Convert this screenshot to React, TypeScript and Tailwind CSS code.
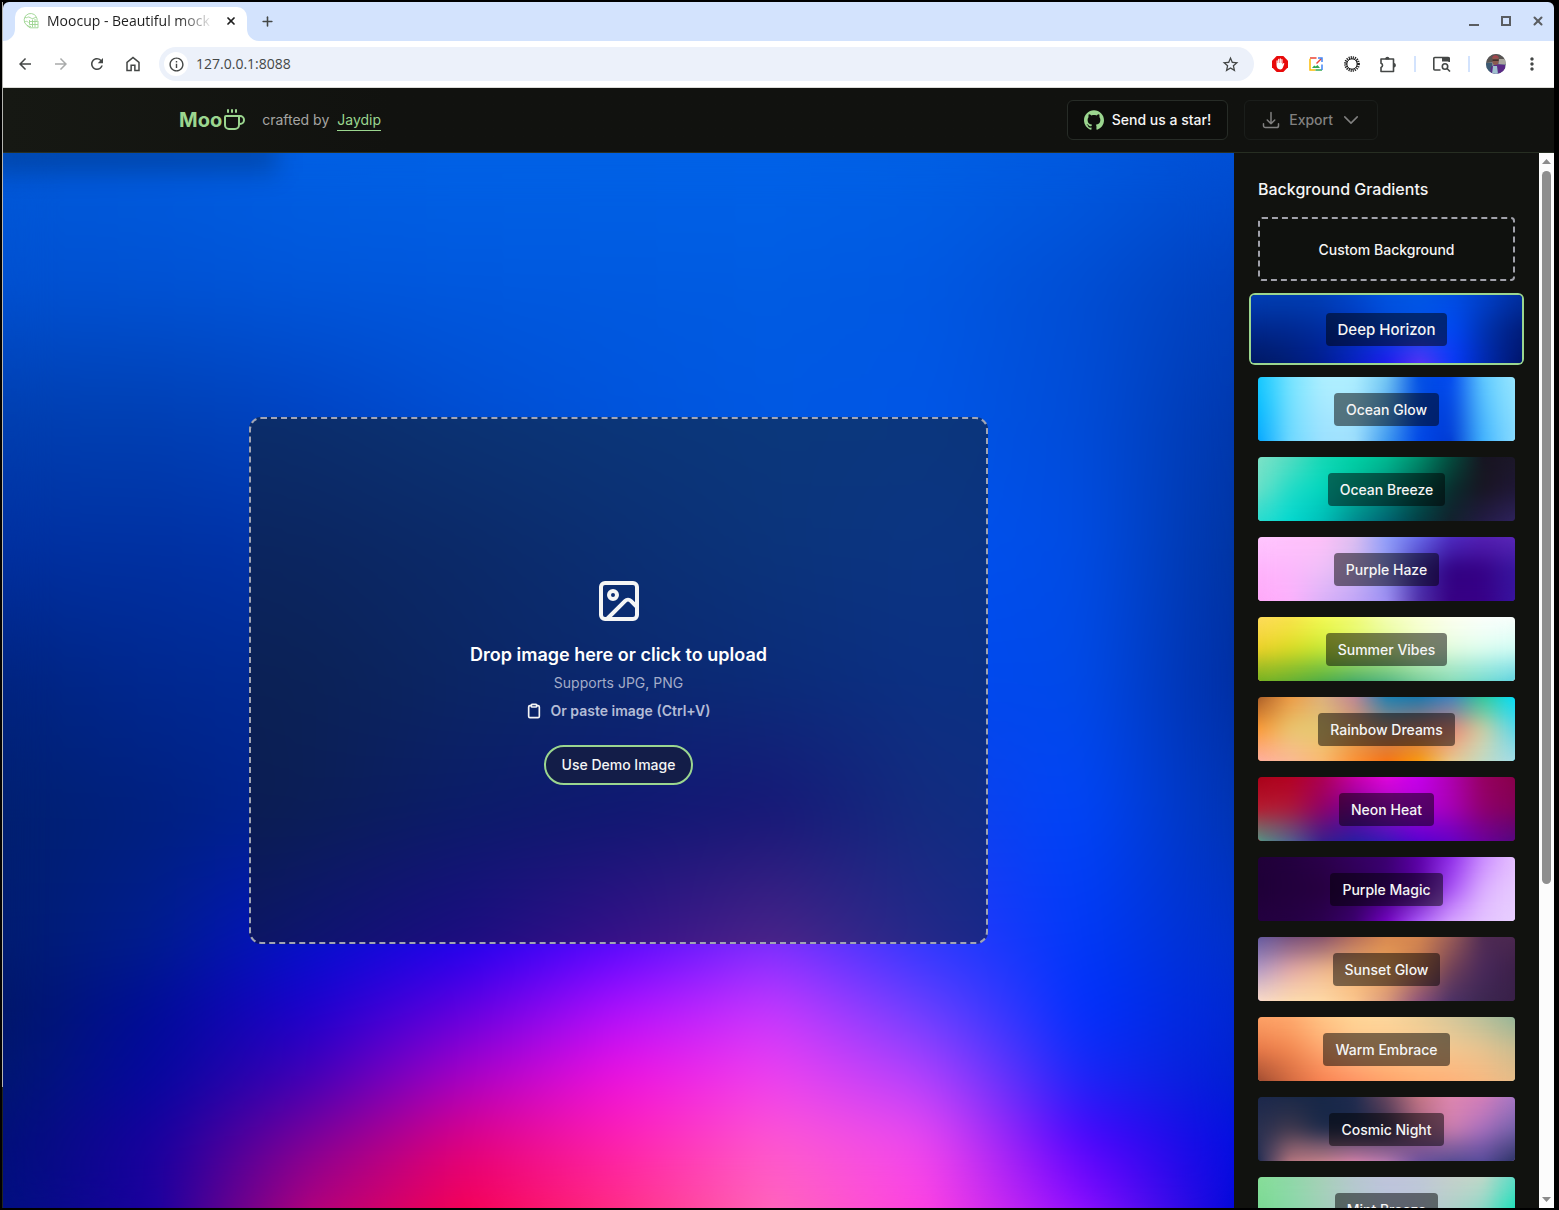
import React from "react";
import { Clipboard, Coffee, Image as ImageIcon, Plus, X } from "lucide-react";
import { MdArrowBack, MdArrowForward, MdInfoOutline, MdMoreVert, MdRefresh, MdStarOutline } from "react-icons/md";
import { SiGithub } from "react-icons/si";

type Mesh = string[];

/* Rows of evenly spaced colour stops, blended into each other from top to bottom. */
function MeshRows({ rows, positions }: { rows: Mesh; positions?: number[] }) {
  const at = (i: number) => (positions ? positions[i] : (i * 100) / (rows.length - 1));
  return (
    <>
      {rows.map((row, i) => {
        const stops = row.split(" ").map((c) => `#${c}`).join(", ");
        const mask = i === 0 ? undefined : `linear-gradient(to bottom, transparent ${at(i - 1)}%, black ${at(i)}%)`;
        return (
          <span
            key={i}
            className="absolute inset-0"
            style={{ backgroundImage: `linear-gradient(to right, ${stops})`, maskImage: mask }}
          />
        );
      })}
    </>
  );
}

/* A sharp copy keeps the edges opaque; the blurred copy above it softens the colour joins. */
function MeshGradient({ rows, positions, blur }: { rows: Mesh; positions?: number[]; blur: string }) {
  return (
    <>
      <MeshRows rows={rows} positions={positions} />
      <span className={`absolute inset-0 ${blur}`}>
        <MeshRows rows={rows} positions={positions} />
      </span>
    </>
  );
}

const canvasPositions = [0, 12.5, 25, 37.5, 50, 62.5, 75, 81.25, 87.5, 93.75, 100];

const canvasMesh: Mesh = [
  "005ada 005cde 0060e4 0062e6 0062e6 0062e8 0060e4 005ae0 0050d6",
  "0050d0 0052d4 0056da 0058de 005ae0 005ce2 0058e2 004ed4 0040bc",
  "003fb0 0040b4 0044c4 004ed2 0054dc 0058e2 0056e6 004cd8 0038ac",
  "0030a0 0031a2 0034ac 003cbc 0046d0 0050e0 0052f0 004ce4 0034a0",
  "002480 002890 002c98 0034b4 003ac8 0040dc 0048f0 004ae8 002ea0",
  "002070 002080 002498 0020bc 0818cc 1818d8 1040e8 0044f8 0034b0",
  "001c70 001c90 0410cc 2000f0 5808ff 8030ff 3038ff 0038f8 0030c8",
  "001868 000c98 1c00d0 6000e0 b010ff c838ff 6840ff 0030ff 0028d0",
  "001870 0408a0 4000b8 a800c8 f010e0 f040f0 b040ff 1828f8 0020d0",
  "001078 1800a0 800098 e00080 ff20b0 ff58d0 f048f0 5000ff 0010e0",
  "001080 1c00a0 b80078 f80050 ff3080 ff68b8 ff40e0 9810ff 0008d8",
];

const gradients: { name: string; selected?: boolean; mesh: Mesh }[] = [
  {
    name: "Deep Horizon",
    selected: true,
    mesh: [
      "0040b8 0040b4 0040b8 0048cc 0054e0 0058e4 004ee0 0040c8 0030a0",
      "00288c 002890 002c9c 0034b8 0048d8 0050e8 0048f4 0030a8 001c78",
      "001860 001c70 001c8c 0820c0 2018f0 6030f8 0838f8 0028a8 001468",
    ],
  },
  {
    name: "Ocean Glow",
    mesh: [
      "10c8ff 78e4ff b0f0ff b0f0ff 78ccf4 0050e4 0048f0 60ccff 9ce8ff",
      "00b8ff 74e0ff a8e8ff a8e8ff 60b4f0 0048e0 0040e0 50c0ff 94e4ff",
      "00a4ff 70d8ff 9ce0ff a0e0fc 3c98f0 0048e8 0038d0 40b4ff 8cdcff",
    ],
  },
  {
    name: "Ocean Breeze",
    mesh: [
      "80e4c8 58dcc0 18d8b4 00d4a8 00c094 009470 045040 181420 1c1828",
      "70e0c8 20dcc8 00d8c0 00b898 009080 005c50 082c2c 181420 201838",
      "28dcd0 00d8d0 00bcb8 008890 006070 043c44 14202c 241c48 302460",
    ],
  },
  {
    name: "Purple Haze",
    mesh: [
      "ffc8ff ffc4fc ffc0f8 e0c0f0 90a0fc 6c70f0 5030c8 5824b8 5c28b8",
      "ffb4fc fcb8fc f0c0f8 d0b8f0 9098f0 4030b0 300080 340084 3818a0",
      "ffa8f8 fcb0fc d8b0f8 c0a4f8 a090f4 5030a8 380084 380088 3814a0",
    ],
  },
  {
    name: "Summer Vibes",
    mesh: [
      "ffdc60 fce450 f8fc58 f4fc78 f8ffb8 fcffd8 fffff0 fefefc fcfefc",
      "f0d028 dcdc20 c8e830 d8f460 d8f888 e8ffc0 e4fce0 e0fff0 d0fcf4",
      "70b020 5cac34 44a848 38a468 48b080 6cc898 80d8b4 6cd8cc 58d0e0",
    ],
  },
  {
    name: "Rainbow Dreams",
    mesh: [
      "a05828 f09840 dcb080 c0849c 0c80b8 0878b4 3080c8 20c898 00e0ff",
      "ff9830 e8c870 e4cc70 d8a060 b08878 c87868 f08070 d8d0a0 50d8f0",
      "ffb0a8 fcb898 fcb870 ff9030 ff7008 ff9c00 e8d090 c0dcc8 a8dce8",
    ],
  },
  {
    name: "Neon Heat",
    mesh: [
      "a80018 b40020 b00050 d000a8 e808e0 c800f0 b000b0 980060 880048",
      "b81c30 b01838 900068 7800a0 a008c0 b000d8 a800b8 90006c 800058",
      "50a088 486898 302090 2020a0 3018b8 5000d0 6000c8 6800a0 500880",
    ],
  },
  {
    name: "Purple Magic",
    mesh: [
      "200038 240040 2c004c 340060 3c0070 5c00a8 8c28e8 c888ff e8c4ff",
      "200038 22003c 26003e 2c0050 380070 5800a0 a850f8 dcb0ff e8ccff",
      "240040 260044 2c0050 3c0070 7800c8 b060ff d8a8ff e4c4ff e8d0ff",
    ],
  },
  {
    name: "Sunset Glow",
    mesh: [
      "6058a0 6c4878 7c4868 b06858 d88850 d88850 a06058 502c54 4c2850",
      "b098c8 e4a8a8 f0b890 f4b470 f0a858 c07850 704058 48285c 3c2048",
      "ffe0cc ffe0b0 ffdca8 fcc890 d89880 885080 483068 3c2850 382048",
    ],
  },
  {
    name: "Warm Embrace",
    mesh: [
      "ffa468 ffac70 ffc888 ffd898 fcd8a0 ecd098 d4c89c b4c09c 90b498",
      "e87848 f48850 ffa870 ffc088 ffc888 fcc890 f4c890 e8c490 c8bc90",
      "984830 d06840 f88050 ff9060 ffa068 ffac70 ffb078 f8b880 e8bc88",
    ],
  },
  {
    name: "Cosmic Night",
    mesh: [
      "1c284c 182848 182848 202c50 6c4860 c87884 e088b0 d880b8 a878c8",
      "283050 40384c 182848 182848 302c4c a06080 d080b0 a870c0 7060a8",
      "182850 c07c84 d08890 e088b0 c080b8 6850a0 4c4890 504898 283060",
    ],
  },
  {
    name: "Mint Breeze",
    mesh: [
      "88e098 90d8a8 a8d0b8 b8c8d0 c0c4dc c0c8d8 c8d0cc c8d8c8 60dcc8",
      "78d890 88d8a8 a0d0b8 b0c8cc b8c4dc b8c4d8 b0d0c8 90d8c8 10e0b8",
      "60d080 80d0a0 98c8b0 a8c0c8 b0c0d8 b0c4d8 a0d0c8 60d8c0 00e0b0",
    ],
  },
];

function Favicon() {
  return (
    <svg viewBox="0 0 16 16" className="size-4 shrink-0" fill="none" stroke="#9bd48f" strokeWidth="0.9">
      <path d="M14 8.500A6.500 6.500 0 1 0 8 13.500" />
      <path d="M2 4.500c2 1 3-1.500 5 0s3 1.500 6-.5M1.500 9.500c1.500-2 3-1 4 0M6.500 7v4.500M9.500 6.500V14M12 6v8M6.500 8.500H14.500M4 12.500l3 2.300h8V8M6.500 11.500H15" />
    </svg>
  );
}

function HomeIcon() {
  return (
    <svg viewBox="0 0 24 24" className="size-[18px]" fill="currentColor">
      <path d="M5 19.500h3.500v-7h7v7H19v-9.300L12 4.500l-7 5.700v9.300Zm-2 2V9.200L12 2l9 7.200v12.300h-7.500v-7h-3v7H3Z" />
    </svg>
  );
}

function BlockerIcon() {
  return (
    <svg viewBox="0 0 16 16" className="size-4">
      <path d="M4.700 0h6.600L16 4.700v6.600L11.300 16H4.700L0 11.300V4.700z" fill="#e80a0a" />
      <path
        d="M4.500 9V4.800a.6.6 0 0 1 1.200 0V7h.4V3.400a.6.6 0 0 1 1.200 0V7h.4V2.800a.6.6 0 0 1 1.200 0V7h.4V3.600a.6.6 0 0 1 1.200 0v4.800l.7-1c.4-.6 1.300-.3 1.100.4L10.900 11.500c-.4 1.200-1.300 1.900-2.700 1.900-2.300 0-3.700-1.600-3.700-4.400z"
        fill="#fff"
      />
    </svg>
  );
}

function ScreenshotIcon() {
  return (
    <svg viewBox="0 0 14 14" className="size-[14px]" fill="none" strokeWidth="1.500">
      <path d="M1 1h6.500" stroke="#ea4335" />
      <path d="M1 1.800V13h5.500" stroke="#fbbc04" />
      <path d="M6.500 13H13" stroke="#34a853" />
      <path d="M13 13V7.500" stroke="#4285f4" />
      <path d="M7.500 6.500 12.500 1.500" stroke="#ea4335" />
      <path d="M9 1h4v4" stroke="#4285f4" />
      <path d="m3 11 2.200-2.500 1.500 1L8.500 8l2.500 3z" fill="#34a853" />
    </svg>
  );
}

function BurstIcon() {
  return (
    <svg viewBox="0 0 16 16" className="size-4" fill="none" stroke="#222">
      <circle cx="8" cy="8" r="6.400" strokeWidth="3" strokeDasharray="1.100 0.910" />
      <circle cx="8" cy="8" r="5.200" strokeWidth="1" />
    </svg>
  );
}

function PuzzleIcon() {
  return (
    <svg viewBox="0 0 17 17" className="size-[17px]" fill="none" stroke="#444746" strokeWidth="1.600" strokeLinejoin="round">
      <path d="M1 3h12.500v12.500H1v-4.100a2.200 2.200 0 0 0 0-4.200z" />
      <path d="M5.900 2.600a1.500 1.500 0 0 1 2.900 0zM14 7.800a1.500 1.500 0 0 1 0 2.900z" fill="#444746" />
    </svg>
  );
}

function TabSearchIcon() {
  return (
    <svg viewBox="0 0 18 16" className="h-4 w-[18px]" fill="none" stroke="#444746" strokeWidth="1.600">
      <path d="M7.500 14H1.800a1 1 0 0 1-1-1V2.500a1 1 0 0 1 1-1h13.400a1 1 0 0 1 1 1V6" />
      <path d="M9 1.500h7.500v4H9z" fill="#444746" stroke="none" />
      <circle cx="12" cy="10.500" r="2.700" />
      <path d="m14 12.500 3 3" />
    </svg>
  );
}

function Avatar() {
  return (
    <svg viewBox="0 0 20 20" className="size-5 rounded-full">
      <rect width="20" height="20" fill="#7d8792" />
      <path d="M0 0h20v6L0 9z" fill="#585452" />
      <path d="M13 5h7v5h-7z" fill="#a9a79f" />
      <path d="M0 9h6v11H0z" fill="#3d5a73" />
      <path d="M5 13l5-3 9 1v9H4z" fill="#5a2a86" />
      <path d="M7 12h4l1 8H6z" fill="#9fc0cf" />
      <ellipse cx="9.500" cy="6.500" rx="3.200" ry="4.500" fill="#8a5a50" />
      <path d="M6 5c0-5 7-5 7 0l-1-1.500H7z" fill="#a8434d" />
      <path d="M6.500 5.600h6v1.200h-6z" fill="#2a2022" />
    </svg>
  );
}

function OutlineIcon({ path }: { path: string }) {
  return (
    <svg
      viewBox="0 0 24 24"
      className="size-5"
      fill="none"
      stroke="currentColor"
      strokeWidth="1.800"
      strokeLinecap="round"
      strokeLinejoin="round"
    >
      <path d={path} />
    </svg>
  );
}

function BrowserChrome() {
  return (
    <div className="shrink-0 font-['Open_Sans','Noto_Sans',sans-serif] text-[#444746]">
      <div className="flex h-[39px] items-end rounded-t-md bg-[#d3e3fd]">
        <svg viewBox="0 0 12 12" className="size-3 fill-white">
          <path d="M12 0v12H0A12 12 0 0 0 12 0Z" />
        </svg>
        <div className="flex h-[34px] w-[232px] items-center rounded-t-[10px] bg-white px-2 pb-1.5">
          <Favicon />
          <span className="ml-2 whitespace-nowrap bg-linear-to-r from-[#1f1f1f] from-80% to-[#e8e8e8] bg-clip-text text-sm text-transparent">
            Moocup - Beautiful mock
          </span>
          <button aria-label="Close tab" className="ml-auto grid size-4 place-items-center text-[#1f1f1f]">
            <X size={12} strokeWidth={3.5} />
          </button>
        </div>
        <svg viewBox="0 0 12 12" className="size-3 fill-white">
          <path d="M0 0v12h12A12 12 0 0 1 0 0Z" />
        </svg>
        <button aria-label="New tab" className="mb-3 grid size-4 place-items-center">
          <Plus size={15} strokeWidth={2.5} />
        </button>
        <div className="mr-2 mb-3 ml-auto flex items-center gap-4">
          <button aria-label="Minimize" className="grid size-4 place-items-end justify-center pb-[3px]">
            <span className="h-0.5 w-2.5 bg-[#5a5d61]" />
          </button>
          <button aria-label="Maximize" className="grid size-4 place-items-center">
            <span className="size-2.5 border-2 border-[#5a5d61]" />
          </button>
          <button aria-label="Close window" className="grid size-4 place-items-center text-[#5a5d61]">
            <X size={14} strokeWidth={3.5} />
          </button>
        </div>
      </div>
      <div className="flex h-[46px] items-center bg-white px-3">
        <nav className="ml-px flex gap-[18px]">
          <button aria-label="Back"><MdArrowBack size={18} /></button>
          <button aria-label="Forward" className="text-[#a9abab]"><MdArrowForward size={18} /></button>
          <button aria-label="Reload"><MdRefresh size={18} /></button>
          <button aria-label="Home"><HomeIcon /></button>
        </nav>
        <div className="ml-[17px] flex h-[34px] flex-1 items-center rounded-full bg-[#ecf1fa] pr-3.5 pl-[5px]">
          <button aria-label="Site information" className="grid size-6 place-items-center rounded-full bg-white">
            <MdInfoOutline size={17} />
          </button>
          <input aria-label="Address" defaultValue="127.0.0.1:8088" className="ml-2 min-w-0 flex-1 bg-transparent text-sm outline-none" />
          <button aria-label="Bookmark"><MdStarOutline size={19} /></button>
        </div>
        <div className="ml-[18px] flex items-center gap-5">
          <button aria-label="Ad blocker"><BlockerIcon /></button>
          <button aria-label="Screenshot tool" className="w-4 pl-px"><ScreenshotIcon /></button>
          <button aria-label="Burst extension"><BurstIcon /></button>
          <button aria-label="Extensions"><PuzzleIcon /></button>
        </div>
        <span className="ml-[17px] h-4 w-0.5 bg-[#d3e3fd]" />
        <button aria-label="Search tabs" className="ml-[17px]"><TabSearchIcon /></button>
        <span className="ml-[17px] h-4 w-0.5 bg-[#d3e3fd]" />
        <button aria-label="Profile" className="ml-4"><Avatar /></button>
        <button aria-label="Menu" className="ml-4"><MdMoreVert size={20} /></button>
      </div>
      <div className="h-px bg-[#dcdcd8]" />
    </div>
  );
}

function Header() {
  return (
    <header className="h-[65px] shrink-0 border-b border-[#272e22] bg-linear-to-r from-[#161813] to-[#11120f] to-25%">
      <div className="mx-auto flex h-full max-w-[1199px] items-center">
        <div className="flex items-center text-xl font-bold text-[#9bd68f]">
          Moo
          <Coffee size={24} strokeWidth={2} />
        </div>
        <p className="ml-4 flex gap-2 text-sm text-[#a5a5a2]">
          crafted by
          <a href="#jaydip" className="border-b border-[#9bd68f] leading-5 text-[#9bd68f]">Jaydip</a>
        </p>
        <div className="ml-auto flex gap-4 text-sm font-medium">
          <button className="flex h-10 items-center gap-2 rounded-md border border-[#272c27] bg-[#0d0e0c] px-4 text-[#f5f5f5]">
            <SiGithub size={20} color="#9bd68f" />
            Send us a star!
          </button>
          <button className="flex h-10 items-center gap-2 rounded-md border border-[#1b1e1b] px-4 text-[#818180]">
            <OutlineIcon path="M3 16.500v2.250A2.250 2.250 0 0 0 5.250 21h13.500A2.250 2.250 0 0 0 21 18.750V16.500M16.500 12 12 16.500m0 0L7.500 12m4.500 4.500V3" />
            Export
            <OutlineIcon path="m19.500 8.250-7.500 7.500-7.500-7.500" />
          </button>
        </div>
      </div>
    </header>
  );
}

function Canvas() {
  return (
    <main className="relative grid min-w-0 flex-1 place-items-center overflow-hidden">
      <MeshGradient rows={canvasMesh} positions={canvasPositions} blur="blur-xl" />
      <div className="absolute -top-4 -left-4 h-9 w-[290px] bg-black/20 blur-md" />
      <section className="relative flex h-1/2 w-3/5 flex-col items-center justify-center rounded-xl border-2 border-dashed border-[#a1a5b4] bg-[#161716]/50">
        <ImageIcon size={48} color="#f5f5f5" />
        <h2 className="mt-4 text-lg leading-7 font-semibold text-white">Drop image here or click to upload</h2>
        <p className="mt-1 text-sm text-[#a3acc8]">Supports JPG, PNG</p>
        <p className="mt-2 flex items-center gap-2 text-sm font-semibold text-[#b4bcd6]">
          <Clipboard size={16} color="#f5f5f5" strokeWidth={2.5} />
          Or paste image (Ctrl+V)
        </p>
        <button className="mt-6 h-10 rounded-full border-2 border-[#9bd68f] bg-[#131d48] px-4 text-sm font-medium text-[#f5f5f5]">
          Use Demo Image
        </button>
      </section>
    </main>
  );
}

function GradientSwatch({ name, mesh, selected }: { name: string; mesh: Mesh; selected?: boolean }) {
  return (
    <button
      aria-pressed={!!selected}
      className={
        selected
          ? "relative -mx-[7px] -my-0.5 grid h-[68px] shrink-0 place-items-center rounded-sm text-[15px] ring-2 ring-[#9bd68f]"
          : "relative grid h-16 shrink-0 place-items-center rounded-sm text-sm"
      }
    >
      <span className="absolute inset-0 overflow-hidden rounded-sm">
        <MeshGradient rows={mesh} blur="blur-sm" />
      </span>
      <span className="relative rounded-sm bg-black/50 px-3 py-1.5 leading-[21px] font-medium text-[#f5f5f5]">{name}</span>
    </button>
  );
}

function Scrollbar() {
  return (
    <div className="flex w-[15px] shrink-0 flex-col items-center bg-[#fcfcfc] py-1.5">
      <svg viewBox="0 0 9 5" className="h-[5px] w-[9px] fill-[#8b8b8b]"><path d="M0 5h9L4.500 0z" /></svg>
      <div className="my-[7px] flex w-[9px] flex-1 flex-col">
        <div className="h-[70%] rounded-full bg-[#8f8f8f]" />
      </div>
      <svg viewBox="0 0 9 5" className="h-[5px] w-[9px] fill-[#8b8b8b]"><path d="M0 0h9L4.500 5z" /></svg>
    </div>
  );
}

function Sidebar() {
  return (
    <aside className="flex w-80 shrink-0 bg-[#11120f]">
      <div className="flex min-w-0 flex-1 flex-col gap-4 overflow-hidden p-6">
        <h2 className="text-base font-medium text-[#f5f5f5]">Background Gradients</h2>
        <button className="h-16 shrink-0 rounded-sm border-2 border-dashed border-[#a1a1aa] bg-[#0f110e] text-sm leading-[21px] font-medium text-[#f5f5f5]">
          Custom Background
        </button>
        {gradients.map((g) => (
          <GradientSwatch key={g.name} {...g} />
        ))}
      </div>
      <Scrollbar />
    </aside>
  );
}

export default function App() {
  return (
    <div className="flex h-screen bg-black py-0.5 pr-[5px] pl-0.5">
      <div className="w-px bg-linear-to-b from-[#b5b5b0] from-90% to-[#22251f] to-90%" />
      <div className="flex min-w-0 flex-1 flex-col">
        <BrowserChrome />
        <div className="flex min-h-0 flex-1 flex-col font-[Inter,sans-serif]">
          <Header />
          <div className="flex min-h-0 flex-1">
            <Canvas />
            <Sidebar />
          </div>
        </div>
      </div>
    </div>
  );
}
